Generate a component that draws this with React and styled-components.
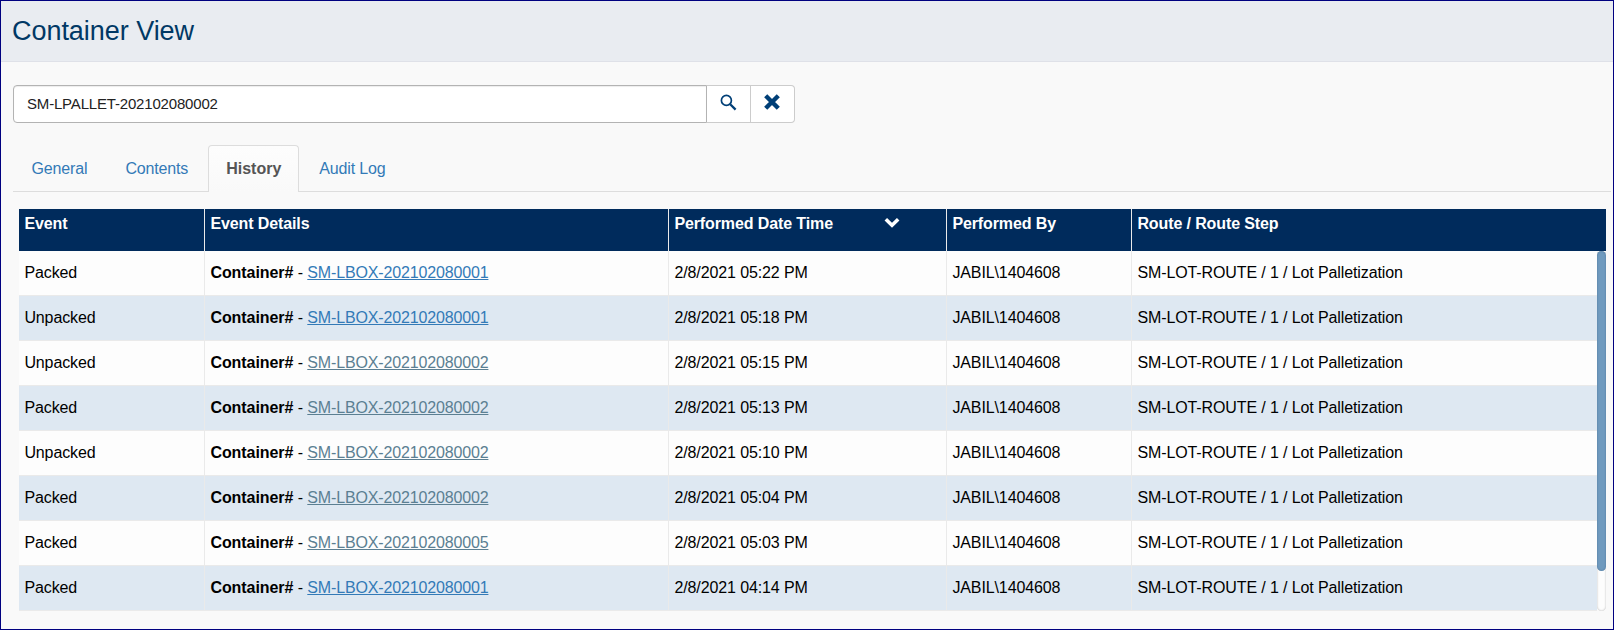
import React from "react";
import styled, { createGlobalStyle } from "styled-components";

const GlobalStyle = createGlobalStyle`
  *, *::before, *::after { box-sizing: border-box; }
  body {
    margin: 0;
    font-family: "Liberation Sans", Arial, sans-serif;
    font-size: 16px;
    color: #000;
  }
`;

const Page = styled.div`
  display: flex;
  flex-direction: column;
  width: 100%;
  height: 630px;
  border: 1px solid #000080;
  background: #f9f9f9;
  overflow: hidden;
`;

const PageHeader = styled.header`
  height: 61px;
  flex: none;
  padding: 15px 0 0 11px;
  background: #e9ecf1;
  border-bottom: 1px solid #dfe1e8;
`;

const Title = styled.h1`
  margin: 0;
  font-size: 27px;
  line-height: 31px;
  font-weight: 400;
  letter-spacing: -0.04px;
  color: #003865;
`;

const Content = styled.main`
  display: flex;
  flex-direction: column;
  padding: 23px 2px 0 12px;
`;

const SearchGroup = styled.div`
  display: flex;
  width: 782px;
  height: 38px;
`;

const SearchInput = styled.input`
  flex: 1;
  min-width: 0;
  margin: 0;
  padding: 0 13px 1px;
  border: 1px solid #b3b3b3;
  border-radius: 4px 0 0 4px;
  background: #fff;
  box-shadow: inset 0 1px 1px rgba(0, 0, 0, 0.075);
  font: inherit;
  font-size: 15px;
  letter-spacing: -0.18px;
  color: #222;
  outline: none;
`;

const IconButton = styled.button`
  display: flex;
  align-items: center;
  justify-content: center;
  width: 44px;
  padding: 0 1px 4px 0;
  border: 1px solid #ccc;
  border-left: 0;
  border-radius: ${(p) => (p.$last ? "0 4px 4px 0" : "0")};
  background: #fff;
  color: #003f77;
`;

const Tabs = styled.nav`
  display: flex;
  align-items: flex-end;
  gap: 2px;
  height: 47px;
  margin-top: 22px;
  border-bottom: 1px solid #ddd;
`;

const Tab = styled.a`
  height: 47px;
  margin-bottom: -1px;
  padding: 13px 16.5px 0 17.5px;
  border: 1px solid ${(p) => (p.$active ? "#ddd" : "transparent")};
  border-bottom: 0;
  border-radius: 4px 4px 0 0;
  background: ${(p) =>
    p.$active ? "linear-gradient(#fdfdfd, #f9f9f9)" : "transparent"};
  font-weight: ${(p) => (p.$active ? 700 : 400)};
  letter-spacing: ${(p) => (p.$active ? "0" : "-0.15px")};
  line-height: 20px;
  color: ${(p) => (p.$active ? "#555" : "#337ab7")};
`;

const Grid = styled.section`
  width: 1587px;
  margin: 17px 0 0 6px;
  letter-spacing: -0.11px;
`;

const columns = "186px 464px 278px 185px 1fr";

const HeaderRow = styled.div`
  display: grid;
  grid-template-columns: ${columns};
  height: 42px;
  background: #002b5c;
  color: #fff;
  font-weight: 700;
`;

const HeaderCell = styled.div`
  display: flex;
  justify-content: space-between;
  align-items: flex-start;
  padding: 5px 46px 0 5.4px;
  line-height: 20px;
  border-right: 1px solid #eaeaea;
  &:last-child { border-right: 0; }
`;

const GridBody = styled.div`
  display: flex;
`;

const Rows = styled.div`
  flex: 1;
`;

const Row = styled.div`
  display: grid;
  grid-template-columns: ${columns};
  height: 45px;
  background: #fdfdfd;
  &:nth-child(even) { background: #dee8f2; }
`;

const Cell = styled.div`
  padding: 12px 5px 0 5.4px;
  line-height: 20px;
  white-space: pre;
  border-right: 1px solid #eaeaea;
  border-bottom: 1px solid #eaeaea;
  &:last-child { border-right: 0; }
`;

const Label = styled.b`
  letter-spacing: -0.06px;
`;

const ContainerLink = styled.a`
  color: ${(p) => (p.$visited ? "#5b7f92" : "#337ab7")};
  letter-spacing: -0.15px;
  text-decoration: underline;
`;

const ScrollTrack = styled.div`
  width: 9px;
  height: 360px;
  border-radius: 5px;
  background: #fdfdfd;
  box-shadow: inset 0 0 2px rgba(0, 0, 0, 0.3);
`;

const ScrollThumb = styled.div`
  height: 320px;
  border-radius: 5px;
  background: #6f9abe;
  box-shadow: inset 0 0 2px rgba(0, 40, 80, 0.35);
`;

const SearchIcon = () => (
  <svg width="17" height="17" viewBox="0 0 17 17" fill="none" stroke="currentColor">
    <circle cx="6.4" cy="6.4" r="5" strokeWidth="1.7" />
    <path d="M10.2 10.2 15.6 15.6" strokeWidth="2.3" />
  </svg>
);

const CloseIcon = () => (
  <svg width="16" height="16" viewBox="0 0 16 16" fill="none" stroke="currentColor">
    <path d="M1.7 1.7 14.3 14.3M14.3 1.7 1.7 14.3" strokeWidth="4.4" />
  </svg>
);

const SortIcon = () => (
  <svg width="16" height="18" viewBox="0 0 16 18" fill="none" stroke="currentColor">
    <path d="M1.8 5.3 8 11.2 14.2 5.3" strokeWidth="3.6" />
  </svg>
);

const events = [
  ["Packed", "SM-LBOX-202102080001", "05:22"],
  ["Unpacked", "SM-LBOX-202102080001", "05:18"],
  ["Unpacked", "SM-LBOX-202102080002", "05:15"],
  ["Packed", "SM-LBOX-202102080002", "05:13"],
  ["Unpacked", "SM-LBOX-202102080002", "05:10"],
  ["Packed", "SM-LBOX-202102080002", "05:04"],
  ["Packed", "SM-LBOX-202102080005", "05:03"],
  ["Packed", "SM-LBOX-202102080001", "04:14"],
];

export default function App() {
  return (
    <Page>
      <GlobalStyle />
      <PageHeader>
        <Title>Container View</Title>
      </PageHeader>
      <Content>
        <SearchGroup>
          <SearchInput defaultValue="SM-LPALLET-202102080002" />
          <IconButton aria-label="Search"><SearchIcon /></IconButton>
          <IconButton $last aria-label="Clear"><CloseIcon /></IconButton>
        </SearchGroup>
        <Tabs>
          <Tab>General</Tab>
          <Tab>Contents</Tab>
          <Tab $active>History</Tab>
          <Tab>Audit Log</Tab>
        </Tabs>
        <Grid>
          <HeaderRow>
            <HeaderCell>Event</HeaderCell>
            <HeaderCell>Event Details</HeaderCell>
            <HeaderCell>Performed Date Time<SortIcon /></HeaderCell>
            <HeaderCell>Performed By</HeaderCell>
            <HeaderCell>Route / Route Step</HeaderCell>
          </HeaderRow>
          <GridBody>
            <Rows>
              {events.map(([event, container, time]) => (
                <Row key={time}>
                  <Cell>{event}</Cell>
                  <Cell>
                    <Label>Container#</Label> -{" "}
                    <ContainerLink $visited={!container.endsWith("1")}>{container}</ContainerLink>
                  </Cell>
                  <Cell>2/8/2021 {time} PM</Cell>
                  <Cell>JABIL\1404608</Cell>
                  <Cell>SM-LOT-ROUTE / 1 / Lot Palletization</Cell>
                </Row>
              ))}
            </Rows>
            <ScrollTrack>
              <ScrollThumb />
            </ScrollTrack>
          </GridBody>
        </Grid>
      </Content>
    </Page>
  );
}
